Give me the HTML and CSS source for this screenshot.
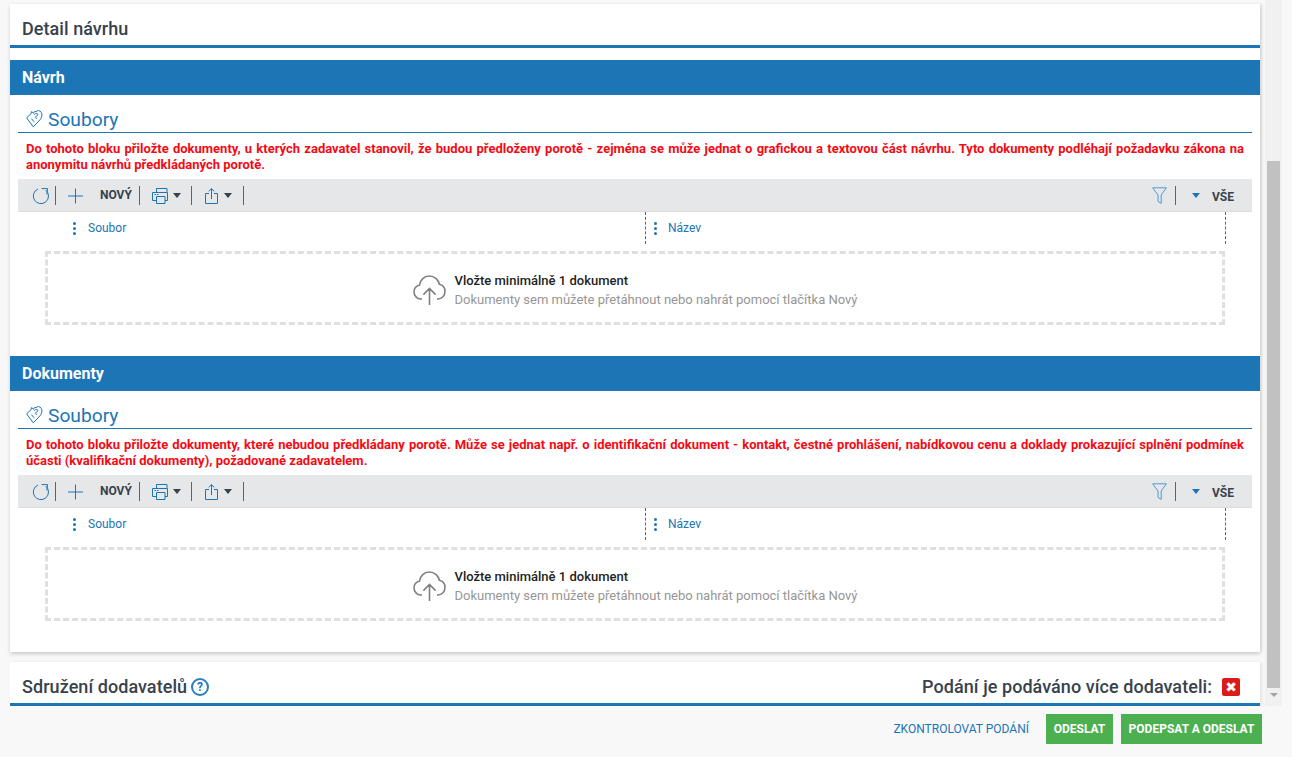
FILE: index.html
```html
<!DOCTYPE html>
<html lang="cs">
<head>
<meta charset="utf-8">
<title>Detail návrhu</title>
<link rel="stylesheet" href="styles.css">
</head>
<body>
<svg class="defs" width="0" height="0" aria-hidden="true">
  <symbol id="i-hand" viewBox="0 0 17 18"><path d="M0.7 8 L7.3 16.8 L14 9.8 C16 7.6 16.6 4.2 15.2 2.2 C13.8 0.2 11.2 0.2 10 1.6 L8.4 1.6 L7.6 3.2 L5.6 1.6 L4.8 4.2 L3.4 5 Z M8.2 4.6 C9.8 3 12.4 3.2 11.8 5 C11.4 6.2 9.6 6 9.4 7.2 C9.3 8 10.2 8.6 11.2 8.2 M5.4 8.6 L8 11.8" fill="none" stroke="currentColor" stroke-width="1"/></symbol>
  <symbol id="i-reload" viewBox="0 0 17 18"><path d="M6 2 A7.6 7.6 0 1 0 13.8 3.2 M9.6 1.6 L15.6 1.6 L14.8 7.4" fill="none" stroke="currentColor" stroke-width="1"/></symbol>
  <symbol id="i-plus" viewBox="0 0 15 16"><path d="M7.5 0.5 V15.5 M0 8 H15" fill="none" stroke="currentColor" stroke-width="1"/></symbol>
  <symbol id="i-print" viewBox="0 0 16 16"><path d="M4.5 4.5 V0.5 H15 V4.5 M4.5 12.5 H0.5 V4.5 H15.5 V12.5 H13 M4.5 8.5 H13 V15.5 H4.5 Z M2.5 6.5 H4 M5 6.5 H6.5" fill="none" stroke="currentColor" stroke-width="1"/></symbol>
  <symbol id="i-share" viewBox="0 0 13 16"><path d="M4 5.5 H0.5 V15.5 H12.5 V5.5 H9 M6.5 11 V0.8 M3.8 3.4 L6.5 0.6 L9.2 3.4" fill="none" stroke="currentColor" stroke-width="1"/></symbol>
  <symbol id="i-filter" viewBox="0 0 15 17"><path d="M0.6 0.8 H14.4 L9.2 8 V16.4 L6 14.4 V8 Z" fill="none" stroke="currentColor" stroke-width="1"/></symbol>
  <symbol id="i-cloud" viewBox="0 0 33 30"><path d="M9 24 H8 C4 24 1 20.8 1 17 C1 13.6 3.2 11 6.4 10.3 C7.2 5 11.2 1 16.4 1 C21.4 1 25.4 4.6 26.4 9.3 C29.8 10 32 13 32 16.6 C32 20.6 29 24 25 24 H24 M16.5 30 V13.5 M10.4 19.6 L16.5 13.4 L22.6 19.6" fill="none" stroke="currentColor" stroke-width="1.6"/></symbol>
</svg>
<div class="viewport">
  <main class="content">
    <div class="card">
      <h1 class="card-title">Detail návrhu</h1>
      <section class="block">
        <h2 class="block-bar">Návrh</h2>
        <div class="files">
          <h3 class="files-title"><svg class="hand"><use href="#i-hand"/></svg>Soubory</h3>
          <p class="notice">Do tohoto bloku přiložte dokumenty, u kterých zadavatel stanovil, že budou předloženy porotě - zejména se může jednat o grafickou a textovou část návrhu. Tyto dokumenty podléhají požadavku zákona na anonymitu návrhů předkládaných porotě.</p>
          <div class="toolbar">
            <svg class="ic ic-reload"><use href="#i-reload"/></svg><span class="sep"></span>
            <svg class="ic ic-plus"><use href="#i-plus"/></svg><span class="tb-label tb-new">NOVÝ</span><span class="sep"></span>
            <svg class="ic ic-print"><use href="#i-print"/></svg><span class="caret"></span><span class="sep"></span>
            <svg class="ic ic-share"><use href="#i-share"/></svg><span class="caret"></span><span class="sep"></span>
            <span class="tb-spacer"></span>
            <svg class="ic ic-filter"><use href="#i-filter"/></svg><span class="sep"></span>
            <span class="caret caret-blue"></span><span class="tb-label tb-all">VŠE</span>
          </div>
          <div class="columns">
            <div class="col col-a"><span class="dots"><i></i><i></i><i></i></span>Soubor</div>
            <div class="col col-b"><span class="dots"><i></i><i></i><i></i></span>Název</div>
          </div>
          <div class="drop">
            <svg class="cloud"><use href="#i-cloud"/></svg>
            <div class="drop-text"><strong>Vložte minimálně 1 dokument</strong><span>Dokumenty sem můžete přetáhnout nebo nahrát pomocí tlačítka Nový</span></div>
          </div>
        </div>
      </section>
      <section class="block">
        <h2 class="block-bar">Dokumenty</h2>
        <div class="files">
          <h3 class="files-title"><svg class="hand"><use href="#i-hand"/></svg>Soubory</h3>
          <p class="notice">Do tohoto bloku přiložte dokumenty, které nebudou předkládany porotě. Může se jednat např. o identifikační dokument - kontakt, čestné prohlášení, nabídkovou cenu a doklady prokazující splnění podmínek účasti (kvalifikační dokumenty), požadované zadavatelem.</p>
          <div class="toolbar">
            <svg class="ic ic-reload"><use href="#i-reload"/></svg><span class="sep"></span>
            <svg class="ic ic-plus"><use href="#i-plus"/></svg><span class="tb-label tb-new">NOVÝ</span><span class="sep"></span>
            <svg class="ic ic-print"><use href="#i-print"/></svg><span class="caret"></span><span class="sep"></span>
            <svg class="ic ic-share"><use href="#i-share"/></svg><span class="caret"></span><span class="sep"></span>
            <span class="tb-spacer"></span>
            <svg class="ic ic-filter"><use href="#i-filter"/></svg><span class="sep"></span>
            <span class="caret caret-blue"></span><span class="tb-label tb-all">VŠE</span>
          </div>
          <div class="columns">
            <div class="col col-a"><span class="dots"><i></i><i></i><i></i></span>Soubor</div>
            <div class="col col-b"><span class="dots"><i></i><i></i><i></i></span>Název</div>
          </div>
          <div class="drop">
            <svg class="cloud"><use href="#i-cloud"/></svg>
            <div class="drop-text"><strong>Vložte minimálně 1 dokument</strong><span>Dokumenty sem můžete přetáhnout nebo nahrát pomocí tlačítka Nový</span></div>
          </div>
        </div>
      </section>
    </div>
    <div class="card card-second">
      <div class="second-head">
        <span class="second-title">Sdružení dodavatelů</span>
        <span class="help">?</span>
        <span class="tb-spacer"></span>
        <span class="second-title">Podání je podáváno více dodavateli:</span>
        <span class="close-box">✖</span>
      </div>
    </div>
  </main>
  <div class="scrollbar"><div class="thumb"></div><div class="arrow"></div></div>
</div>
<footer class="actions">
  <a class="link-btn">ZKONTROLOVAT PODÁNÍ</a>
  <a class="btn btn-send">ODESLAT</a>
  <a class="btn btn-sign">PODEPSAT A ODESLAT</a>
</footer>
</body>
</html>
```
FILE: styles.css
```css
* { box-sizing: border-box; }
html, body { margin: 0; height: 100%; }
body {
  width: 1292px;
  height: 757px;
  overflow: hidden;
  background: #f8f8f8;
  font-family: Roboto, "Liberation Sans", sans-serif;
  color: #37424d;
}
.defs { position: absolute; }
.viewport { display: flex; height: 706px; padding-right: 10px; }
.content { width: 1265px; height: 706px; overflow: hidden; padding: 4px 5px 0 10px; }
.card { background: #fff; height: 648px; box-shadow: 0 2px 4px rgba(0,0,0,.16), 2px 0 3px rgba(0,0,0,.08); }
.card-second { margin-top: 10px; height: 44px; box-shadow: 2px 0 3px rgba(0,0,0,.08); }
.card-title {
  margin: 0 0 12px;
  height: 44px;
  padding: 14px 12px 0;
  font-size: 18px;
  line-height: 22px;
  font-weight: 500;
  letter-spacing: .06px;
  border-bottom: 3px solid #1c75b5;
}
.block-bar {
  margin: 0;
  height: 35px;
  padding: 1px 12px 0;
  background: #1c75b5;
  color: #fff;
  font-size: 16px;
  line-height: 34px;
  font-weight: 700;
}
.files { padding: 0 8px; height: 261px; }
.files-title {
  margin: 0;
  height: 38px;
  padding-top: 13px;
  display: flex;
  align-items: center;
  color: #1c75b5;
  font-size: 19.2px;
  line-height: 24px;
  font-weight: 400;
  border-bottom: 1px solid #1c75b5;
}
.hand { width: 17px; height: 18px; margin: 0 5px 0 8px; position: relative; top: -1px; }
.notice {
  margin: 8px 0 0;
  height: 38px;
  padding: 0 8px;
  color: #f40a14;
  font-size: 13px;
  line-height: 16px;
  font-weight: 700;
  text-align: justify;
}
.toolbar {
  height: 33px;
  background: #e6e7e9;
  border-bottom: 1px solid #dcdddf;
  display: flex;
  align-items: center;
  color: #1c75b5;
  padding-left: 14px;
}
.ic { display: block; flex: none; }
.ic-reload { width: 17px; height: 18px; margin-top: 1px; }
.ic-plus { width: 15px; height: 16px; margin: 1px 0 0 12px; }
.ic-print { width: 16px; height: 16px; margin: 1px 0 0 12px; }
.ic-share { width: 13px; height: 16px; margin: 1px 0 0 13px; }
.ic-filter { width: 15px; height: 17px; color: #4f9bd0; }
.sep { width: 1px; height: 19px; background: #1c75b5; margin-left: 6px; flex: none; }
.tb-new + .sep { margin-left: 7px; }
.caret + .sep { margin-left: 10px; }
.ic-share + .caret + .sep { margin-left: 11px; }
.ic-filter + .sep { margin-left: 8px; }
.tb-label { font-size: 12px; font-weight: 700; color: #37424d; }
.tb-new { margin: 0 0 1px 17px; }
.tb-all { margin: 3px 18px 0 12px; }
.caret { width: 0; height: 0; border: 4px solid transparent; border-top: 5px solid #37424d; border-bottom: 0; margin-left: 5px; flex: none; }
.ic-share + .caret { margin-left: 6px; }
.caret-blue { border-top-color: #1c75b5; margin-left: 16px; }
.tb-spacer { flex: 1; }
.columns { height: 32px; display: flex; padding-left: 27px; }
.col {
  display: flex;
  align-items: center;
  font-size: 12px;
  color: #1c75b5;
  height: 32px;
  border-right: 1px dashed #3a6f95;
}
.col-a { width: 601px; padding-left: 22px; }
.col-b { width: 580px; padding-left: 2px; }
.dots { display: inline-flex; flex-direction: column; gap: 2px; width: 15px; align-items: center; margin-right: 6px; }
.col-b .dots { margin-right: 5px; }
.dots i { width: 3px; height: 3px; border-radius: 50%; background: #1c75b5; display: block; }
.drop {
  margin: 7px 0 0 27px;
  width: 1180px;
  height: 74px;
  border: 3px dashed #dfdfdf;
  display: flex;
  align-items: center;
  justify-content: center;
  padding-top: 4px;
}
.cloud { width: 33px; height: 30px; color: #808080; margin: 0 9px 0 0; flex: none; }
.drop-text { display: flex; flex-direction: column; font-size: 13px; line-height: 19px; }
.drop-text strong { font-weight: 500; color: #1e1e1e; }
.drop-text span { color: #969696; }
.second-head { height: 44px; display: flex; align-items: center; padding: 8px 20px 0 12px; border-bottom: 3px solid #1c75b5; }
.second-title { font-size: 18px; font-weight: 500; letter-spacing: .06px; }
.help {
  width: 18px; height: 18px; margin-left: 4px; border: 2px solid #2a7fbc; border-radius: 50%;
  color: #1c75b5; font-size: 12px; font-weight: 700; line-height: 14px; text-align: center; flex: none;
}
.close-box {
  width: 18px; height: 18px; margin-left: 10px; background: #db1a1a; border-radius: 2px; color: #fff;
  font-size: 14px; line-height: 18px; text-align: center; flex: none; font-family: "DejaVu Sans", sans-serif;
}
.scrollbar { width: 17px; height: 706px; background: #f1f1f1; padding: 161px 2px 0; display: flex; flex-direction: column; align-items: center; }
.thumb { width: 13px; height: 527px; background: #c1c1c1; flex: none; }
.arrow { margin-top: 5px; width: 0; height: 0; border: 4px solid transparent; border-top: 4px solid #a3a3a3; border-bottom: 0; }
.actions { height: 51px; display: flex; justify-content: flex-end; align-items: flex-start; padding: 8px 30px 0 0; }
.link-btn { color: #1c75b5; font-size: 12px; font-weight: 400; line-height: 30px; margin-right: 17px; }
.btn { height: 30px; line-height: 30px; background: #4caf50; color: #fff; font-size: 12px; font-weight: 700; text-align: center; }
.btn-send { width: 67px; margin-right: 8px; }
.btn-sign { width: 141px; }
```
